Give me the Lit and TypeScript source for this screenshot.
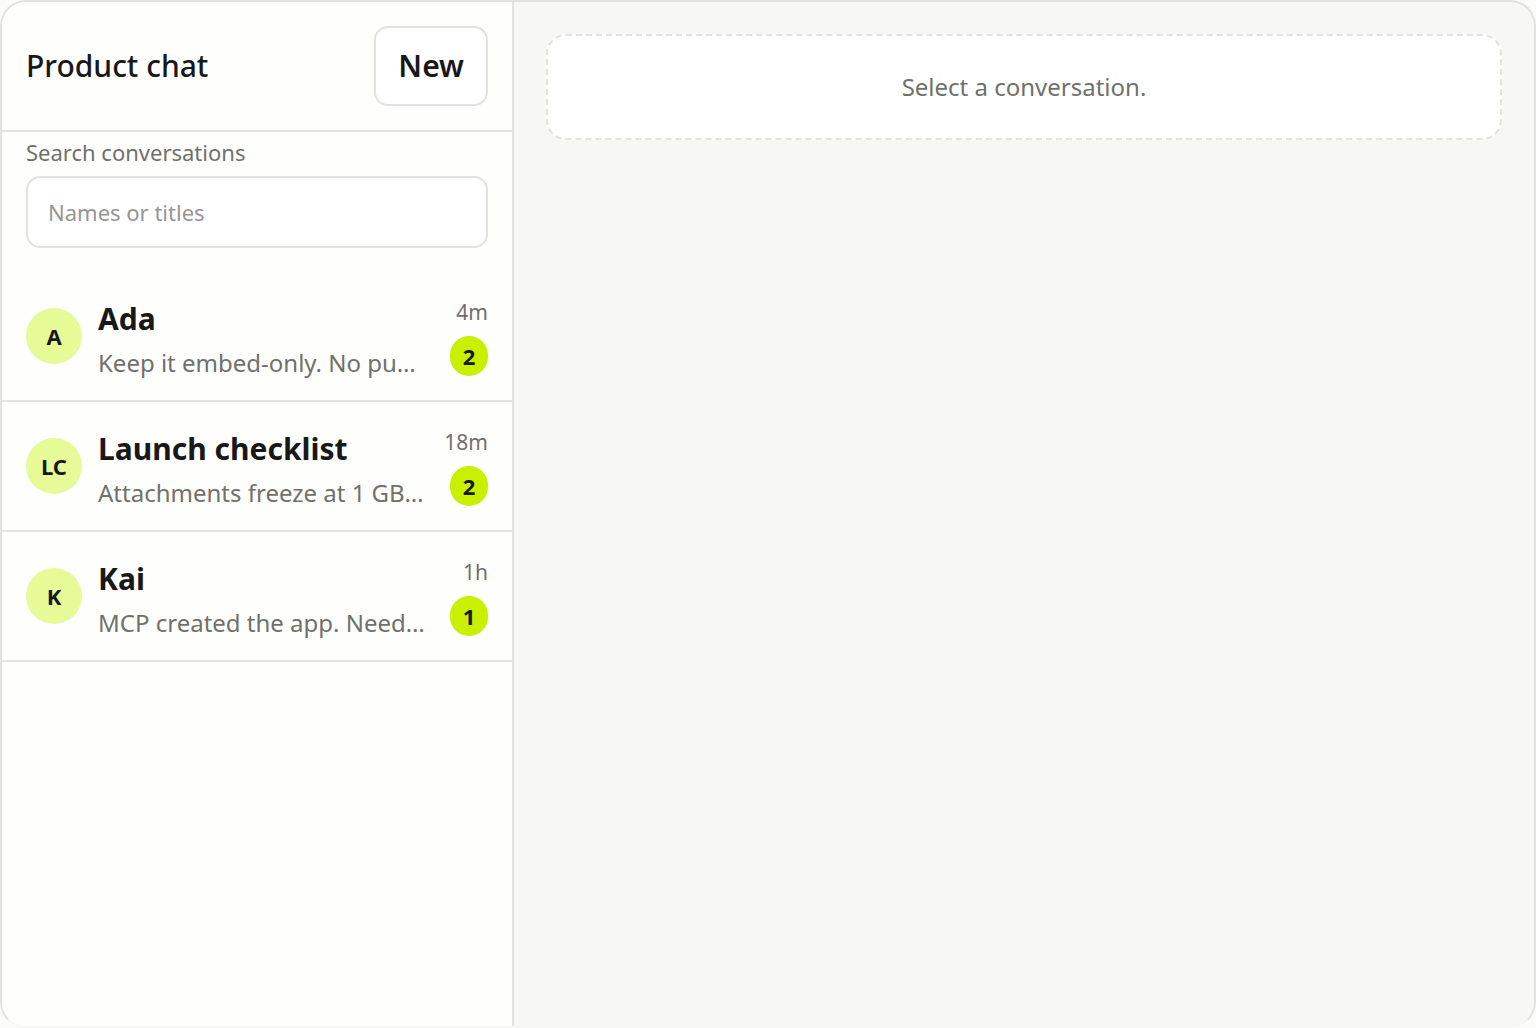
import { LitElement, html, css } from "lit";
import { customElement, property, state } from "lit/decorators.js";

interface Conversation {
  initials: string;
  name: string;
  preview: string;
  time: string;
  unread: number;
}

const CONVERSATIONS: Conversation[] = [
  { initials: "A", name: "Ada", preview: "Keep it embed-only. No pu…", time: "4m", unread: 2 },
  { initials: "LC", name: "Launch checklist", preview: "Attachments freeze at 1 GB…", time: "18m", unread: 2 },
  { initials: "K", name: "Kai", preview: "MCP created the app. Need…", time: "1h", unread: 1 },
];

@customElement("conversation-row")
class ConversationRow extends LitElement {
  @property({ attribute: false }) item!: Conversation;

  static styles = css`
    :host {
      display: block;
      border-bottom: 2px solid #e4e4e1;
    }
    .row {
      display: grid;
      grid-template-columns: 56px minmax(0, 1fr) auto;
      align-items: center;
      gap: 16px;
      width: 100%;
      box-sizing: border-box;
      padding: 20px 24px;
      border: 0;
      background: transparent;
      color: inherit;
      font: inherit;
      text-align: left;
      cursor: pointer;
    }
    .avatar {
      display: grid;
      place-items: center;
      height: 56px;
      border-radius: 50%;
      background: #e7fa98;
      font-size: 22px;
      font-weight: 700;
      line-height: 30px;
    }
    .text {
      display: grid;
    }
    .name {
      font-size: 30px;
      font-weight: 700;
      line-height: 54px;
    }
    .preview {
      font-size: 24px;
      line-height: 34px;
      color: #70706c;
    }
    .name,
    .preview {
      overflow: hidden;
      text-overflow: ellipsis;
      white-space: nowrap;
    }
    .meta {
      display: grid;
      justify-items: end;
      gap: 8px;
    }
    .time {
      font-size: 21px;
      line-height: 32px;
      color: #70706c;
    }
    .badge {
      min-width: 38px;
      box-sizing: border-box;
      border-radius: 20px;
      background: #c8f000;
      font-size: 22px;
      font-weight: 700;
      line-height: 40px;
      text-align: center;
    }
  `;

  render() {
    const c = this.item;
    return html`
      <button class="row" type="button">
        <span class="avatar">${c.initials}</span>
        <span class="text">
          <span class="name">${c.name}</span>
          <span class="preview">${c.preview}</span>
        </span>
        <span class="meta">
          <span class="time">${c.time}</span>
          <span class="badge">${c.unread}</span>
        </span>
      </button>
    `;
  }
}

@customElement("app-root")
class AppRoot extends LitElement {
  @state() private query = "";

  static styles = css`
    :host {
      display: block;
      background: #fbfbf9;
      color: #181818;
      font-family: "Segoe UI", "Noto Sans", "Open Sans", sans-serif;
    }
    .shell {
      display: grid;
      grid-template-columns: minmax(0, 512px) minmax(0, 1fr);
      min-height: 100vh;
      box-sizing: border-box;
      overflow: hidden;
      border: 2px solid #e2e2df;
      border-bottom-color: #f6f6f3;
      border-radius: 26px;
      background: #f7f8f4;
    }
    .sidebar {
      border-right: 2px solid #e2e2df;
      background: #fefefd;
    }
    .header {
      display: flex;
      align-items: center;
      justify-content: space-between;
      padding: 24px;
      border-bottom: 2px solid #e2e2df;
    }
    .title {
      margin: 0;
      font-size: 30px;
      font-weight: 500;
      line-height: 44px;
    }
    .new {
      padding: 16px 22px;
      border: 2px solid #e2e2df;
      border-radius: 14px;
      background: #ffffff;
      color: inherit;
      font: inherit;
      font-size: 30px;
      font-weight: 600;
      line-height: 44px;
      cursor: pointer;
    }
    .search {
      display: grid;
      gap: 8px;
      padding: 4px 24px 24px;
    }
    .label {
      font-size: 22px;
      line-height: 32px;
      color: #70706c;
    }
    .input {
      width: 100%;
      box-sizing: border-box;
      padding: 18px 20px;
      border: 2px solid #e2e2df;
      border-radius: 14px;
      background: #ffffff;
      color: inherit;
      font: inherit;
      font-size: 22px;
      line-height: 32px;
    }
    .input::placeholder {
      color: #969694;
      opacity: 1;
    }
    .list {
      margin: 0;
      padding: 0;
      list-style: none;
    }
    .main {
      padding: 32px;
    }
    .empty {
      margin: 0;
      padding: 34px 24px;
      border: 2px dashed #e2e2df;
      border-radius: 20px;
      background: #ffffff;
      color: #70706c;
      font-size: 24px;
      line-height: 34px;
      text-align: center;
    }
  `;

  private onSearch(event: Event) {
    this.query = (event.target as HTMLInputElement).value;
  }

  render() {
    const needle = this.query.trim().toLowerCase();
    const shown = CONVERSATIONS.filter((c) => c.name.toLowerCase().includes(needle));
    return html`
      <div class="shell">
        <aside class="sidebar">
          <header class="header">
            <h1 class="title">Product chat</h1>
            <button class="new" type="button">New</button>
          </header>
          <div class="search">
            <label class="label" for="search">Search conversations</label>
            <input
              class="input"
              id="search"
              type="search"
              placeholder="Names or titles"
              .value=${this.query}
              @input=${this.onSearch}
            />
          </div>
          <ul class="list">
            ${shown.map((c) => html`<li><conversation-row .item=${c}></conversation-row></li>`)}
          </ul>
        </aside>
        <main class="main">
          <p class="empty">Select a conversation.</p>
        </main>
      </div>
    `;
  }
}
